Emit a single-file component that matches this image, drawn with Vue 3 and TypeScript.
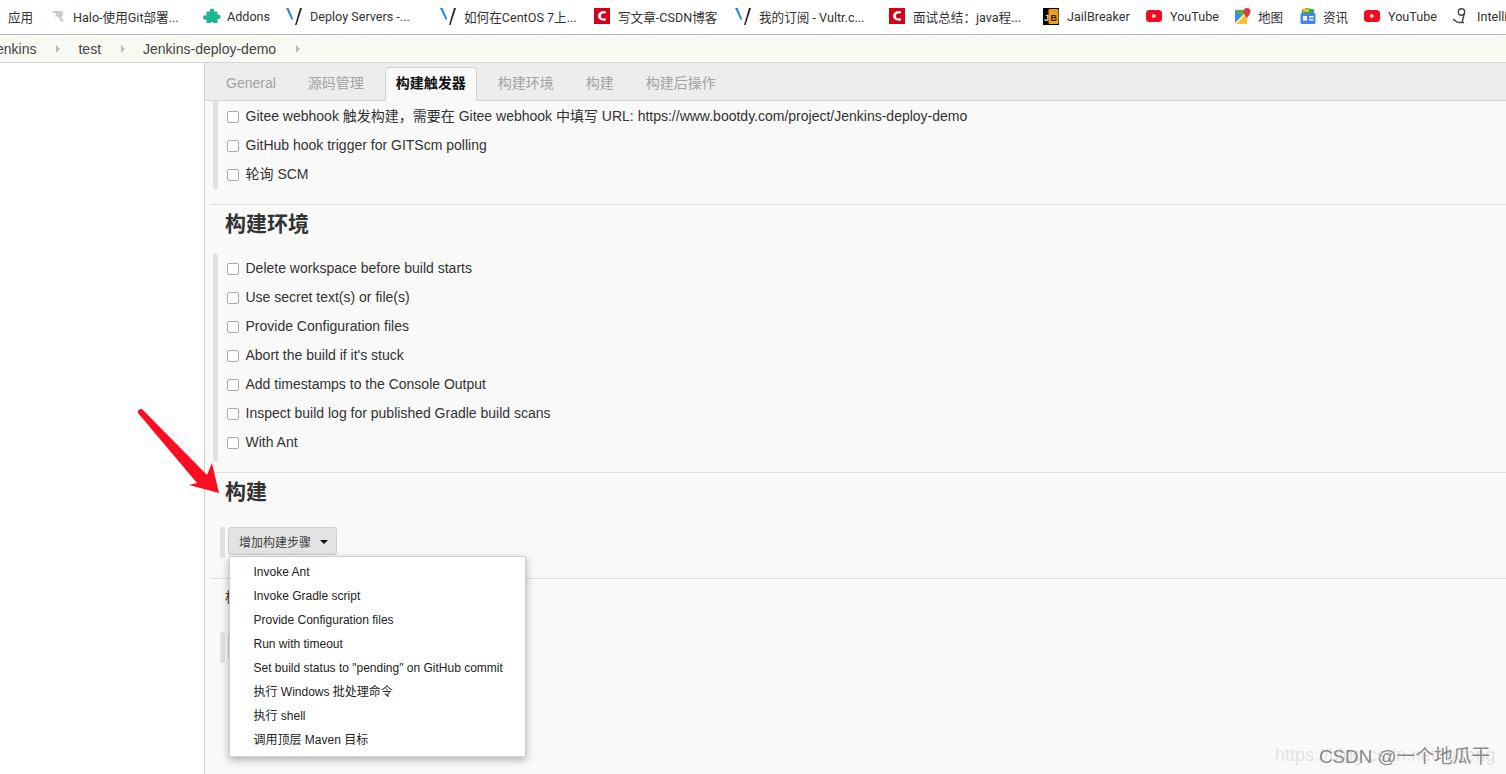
<template>
  <div class="page">
    <div class="bookmarks">
      <div v-for="b in bookmarks" :key="b.left" class="bookmark" :style="{ left: b.left + 'px' }">
        <svg v-if="b.icon" class="bm-icon" viewBox="0 0 18 18">
          <template v-if="b.icon === 'halo'">
            <path d="M3 4h9c3 0 3 5 0 5.500l3 5h-3L9 9.500H6.500L5 14 7 6H4z" fill="#c5ccd2" />
          </template>
          <template v-else-if="b.icon === 'addons'">
            <path d="M7 4.500a2.200 2.200 0 1 1 4 0h3.500v3.200a2.300 2.300 0 1 1 0 4.300V16h-3.800a2 2 0 0 0-3.400 0H3.500v-3.500a2.300 2.300 0 1 1 0-4V4.500z" fill="#1fb592" />
          </template>
          <template v-else-if="b.icon === 'vultr'">
            <path d="M0 1h2.500L7 11.500l-1 2z" fill="#1e88e5" />
            <path d="M14 1h2l-5.500 17H9z" fill="#222" />
          </template>
          <template v-else-if="b.icon === 'csdn'">
            <rect x="0" y="1" width="16" height="16" fill="#d4001a" />
            <path d="M12 4.500c-6-1.500-8 2-8 4.500s3 5.500 8 4.500v-2.200c-3 .8-5 0-5-2.300s2-3.100 5-2.500z" fill="#fff" />
          </template>
          <template v-else-if="b.icon === 'jb'">
            <rect x="0" y="1" width="16" height="17" fill="#000" />
            <rect x="5.500" y="2" width="10" height="15" rx="1.500" fill="#f39c1f" />
            <text x="1" y="13.500" class="jb-j">J</text>
            <text x="7.500" y="13.500" class="jb-b">B</text>
          </template>
          <template v-else-if="b.icon === 'yt'">
            <rect x="0" y="3" width="16" height="12" rx="3.500" fill="#f4071f" />
            <path d="M6.500 6.500l4 2.500-4 2.500z" fill="#fff" />
          </template>
          <template v-else-if="b.icon === 'maps'">
            <path d="M1 3h12v14H1z" fill="#4caf50" />
            <path d="M1 17l12-12v12z" fill="#fbc02d" />
            <path d="M1 3l6 6-6 6z" fill="#4285f4" />
            <path d="M1 17L13 5" stroke="#fff" stroke-width="1.500" />
            <path d="M13 1a3.500 3.500 0 0 1 3.500 3.500C16.500 7 13 11 13 11S9.500 7 9.500 4.500A3.500 3.500 0 0 1 13 1z" fill="#e53935" />
          </template>
          <template v-else-if="b.icon === 'news'">
            <path d="M3 6V2.500L8 1l7 1.500V6z" fill="#34a853" />
            <rect x="4" y="2" width="6" height="3" fill="#fbbc05" />
            <rect x="1.500" y="6" width="15" height="11" rx="1.500" fill="#4285f4" />
            <rect x="4" y="9" width="4" height="4.500" fill="#fff" />
            <rect x="10" y="9" width="4.500" height="1.500" fill="#fff" />
            <rect x="10" y="12" width="4.500" height="1.500" fill="#fff" />
          </template>
          <template v-else>
            <circle cx="8.500" cy="5" r="3.200" fill="none" stroke="#444" stroke-width="1.400" />
            <path d="M11.500 6L9 15.500M0 12.500c2 0 3 3 6 3h5" fill="none" stroke="#444" stroke-width="1.400" />
          </template>
        </svg>
        <span class="bm-text">{{ b.text }}</span>
      </div>
    </div>

    <div class="crumbs">
      <span class="crumb first">Jenkins</span><span class="sep"></span>
      <span class="crumb">test</span><span class="sep"></span>
      <span class="crumb">Jenkins-deploy-demo</span><span class="sep"></span>
    </div>

    <div class="body">
      <aside class="side"></aside>
      <main class="main">
        <div class="tabs">
          <span v-for="t in tabs" :key="t" class="tab" :class="{ active: t === '构建触发器' }">{{ t }}</span>
        </div>

        <div class="section first-section">
          <div class="options trigger">
            <label v-for="o in triggers" :key="o" class="option"><span class="check"></span><span class="label">{{ o }}</span></label>
          </div>
        </div>

        <div class="section">
          <h3>构建环境</h3>
          <div class="options env">
            <label v-for="o in envs" :key="o" class="option"><span class="check"></span><span class="label">{{ o }}</span></label>
          </div>
        </div>

        <div class="section">
          <h3>构建</h3>
          <div class="step-row">
            <button class="add-btn">增加构建步骤<i class="caret"></i></button>
          </div>
        </div>

        <div class="section">
          <h3 class="small">构建后操作</h3>
          <div class="step-row lower">
            <button class="add-btn">增加构建后操作步骤<i class="caret"></i></button>
          </div>
        </div>
      </main>
    </div>

    <div class="menu">
      <div v-for="m in menu" :key="m" class="menu-item">{{ m }}</div>
    </div>

    <svg class="arrow" viewBox="0 0 100 90" width="100" height="90">
      <path d="M1 6c-1-2 1-4 4-4L70 68l5-12 7 30-30-8 8-2z" fill="#fd0d21" />
    </svg>

    <div class="wm-back">https://blog.csdn.net/hxfeng</div>
    <div class="wm-front">CSDN @一个地瓜干</div>
  </div>
</template>

<script setup lang="ts">
interface Bookmark {
  text: string
  left: number
  icon?: string
}

const bookmarks: Bookmark[] = [
  { text: "应用", left: 8 },
  { text: "Halo-使用Git部署...", left: 49, icon: "halo" },
  { text: "Addons", left: 203, icon: "addons" },
  { text: "Deploy Servers -...", left: 286, icon: "vultr" },
  { text: "如何在CentOS 7上...", left: 440, icon: "vultr" },
  { text: "写文章-CSDN博客", left: 594, icon: "csdn" },
  { text: "我的订阅 - Vultr.c...", left: 735, icon: "vultr" },
  { text: "面试总结：java程...", left: 889, icon: "csdn" },
  { text: "JailBreaker", left: 1043, icon: "jb" },
  { text: "YouTube", left: 1146, icon: "yt" },
  { text: "地图", left: 1234, icon: "maps" },
  { text: "资讯", left: 1299, icon: "news" },
  { text: "YouTube", left: 1364, icon: "yt" },
  { text: "IntelliJ IDEA", left: 1453, icon: "idea" },
]

const tabs = ["General", "源码管理", "构建触发器", "构建环境", "构建", "构建后操作"]

const triggers = [
  "Gitee webhook 触发构建，需要在 Gitee webhook 中填写 URL: https://www.bootdy.com/project/Jenkins-deploy-demo",
  "GitHub hook trigger for GITScm polling",
  "轮询 SCM",
]

const envs = [
  "Delete workspace before build starts",
  "Use secret text(s) or file(s)",
  "Provide Configuration files",
  "Abort the build if it's stuck",
  "Add timestamps to the Console Output",
  "Inspect build log for published Gradle build scans",
  "With Ant",
]

const menu = [
  "Invoke Ant",
  "Invoke Gradle script",
  "Provide Configuration files",
  "Run with timeout",
  'Set build status to "pending" on GitHub commit',
  "执行 Windows 批处理命令",
  "执行 shell",
  "调用顶层 Maven 目标",
]
</script>

<style>
html,
body {
  margin: 0;
  overflow: hidden;
  background: #fff;
}
</style>

<style scoped>
.page {
  position: relative;
  width: 1506px;
  height: 774px;
  overflow: hidden;
  font-family: "Liberation Sans", "Noto Sans CJK SC", sans-serif;
  color: #333;
}

.bookmarks {
  position: relative;
  height: 34px;
  background: #fff;
  border-bottom: 1px solid #b9b9b9;
  font-family: "Roboto", "Noto Sans CJK SC", sans-serif;
  font-size: 12.6px;
  color: #333;
  overflow: hidden;
}

.bookmark {
  position: absolute;
  top: 0;
  height: 32px;
  display: flex;
  align-items: center;
  white-space: nowrap;
}

.bm-icon {
  width: 18px;
  height: 18px;
  margin-right: 6px;
  flex: none;
}

.jb-j,
.jb-b {
  font-family: "Liberation Sans", sans-serif;
  font-size: 9px;
  font-weight: 700;
}

.jb-j {
  fill: #ddd;
}

.jb-b {
  fill: #222;
}

.crumbs {
  height: 27px;
  background: #f7f9f3;
  border-bottom: 1px solid #d6d6d6;
  display: flex;
  align-items: center;
  font-size: 14px;
  color: #444;
  white-space: nowrap;
}

.crumb.first {
  margin-left: -11px;
}

.sep {
  width: 0;
  height: 0;
  margin: 0 18px 0 20px;
  border-left: 4px solid #bbb;
  border-top: 4px solid transparent;
  border-bottom: 4px solid transparent;
}

.body {
  display: flex;
  height: 711px;
}

.side {
  width: 204px;
  flex: none;
  background: #fff;
  border-right: 1px solid #d0d0d0;
}

.main {
  flex: 1;
  background: #f9f9f9;
  min-width: 0;
}

.tabs {
  height: 37px;
  box-sizing: content-box;
  background: #ededed;
  border-bottom: 1px solid #d3d3d3;
  display: flex;
  align-items: flex-end;
  padding-left: 10px;
  font-size: 14px;
  color: #a3a3a3;
}

.tab {
  height: 30px;
  line-height: 27px;
  padding: 0 11px;
  white-space: nowrap;
}

.tab:nth-child(2) {
  padding: 0 10px 0 21px;
}

.tab:nth-child(3) {
  margin-left: 11px;
}

.tab.active {
  height: 34px;
  line-height: 31px;
  margin-bottom: -1px;
  background: #f9f9f9;
  color: #111;
  font-weight: 700;
  border: 1px solid #d3d3d3;
  border-bottom: none;
  border-radius: 4px 4px 0 0;
  box-sizing: border-box;
  width: 92px;
  padding: 0;
  text-align: center;
}

.tab.active + .tab {
  padding-left: 21px;
}

.tab:nth-child(5) {
  padding-left: 21px;
  padding-right: 10px;
}

.tab:nth-child(6) {
  padding-left: 22px;
  padding-right: 10px;
}

.section {
  margin-left: 5px;
  border-top: 1px solid #dedede;
}

.first-section {
  border-top: none;
  height: 103px;
}

h3 {
  margin: 0;
  height: 38px;
  padding: 0 0 0 15px;
  font-size: 21px;
  line-height: 38px;
  color: #333;
  font-weight: 700;
}

h3.small {
  font-size: 14px;
  font-weight: 400;
  line-height: 36px;
}

.options {
  margin-left: 3px;
  border-left: 5px solid #e2e2e2;
  padding-left: 9px;
  font-size: 14px;
  color: #333;
}

.trigger {
  height: 88px;
  box-sizing: border-box;
  padding-top: 1px;
}

.env {
  height: 208px;
  margin-top: 11px;
  margin-bottom: 10px;
  box-sizing: border-box;
  padding-top: 0;
}

.option {
  display: flex;
  align-items: center;
  height: 29px;
  white-space: nowrap;
}

.label {
  line-height: 16px;
  margin-top: -2px;
}

.check {
  width: 10px;
  height: 10px;
  margin-right: 6.500px;
  border: 1px solid #aaa;
  border-radius: 2px;
  background: #fff;
  flex: none;
}

.step-row {
  margin: 16px 0 20px 10px;
  height: 31px;
  border-left: 5px solid #e2e2e2;
  padding-left: 3px;
}

.step-row.lower {
  margin-top: 15px;
}

.add-btn {
  height: 28px;
  width: 109px;
  padding: 0 0 0 10px;
  background: #e3e3e3;
  border: 1px solid #d0d0d0;
  border-radius: 3px;
  color: #444;
  font-family: inherit;
  font-size: 12px;
  text-align: left;
  white-space: nowrap;
  overflow: hidden;
}

.caret {
  display: inline-block;
  margin-left: 9px;
  vertical-align: 3px;
  border-top: 4px solid #111;
  border-left: 4px solid transparent;
  border-right: 4px solid transparent;
}

.menu {
  position: absolute;
  left: 229px;
  top: 556px;
  width: 295px;
  height: 198px;
  box-sizing: content-box;
  background: #fff;
  border: 1px solid #cfcfcf;
  box-shadow: 0 3px 8px rgba(0, 0, 0, 0.3);
  padding-top: 1px;
  font-size: 12px;
  color: #222;
}

.menu-item {
  height: 24px;
  line-height: 29px;
  padding-left: 23.500px;
  white-space: nowrap;
}

.arrow {
  position: absolute;
  left: 137px;
  top: 407px;
}

.wm-back,
.wm-front {
  position: absolute;
  white-space: nowrap;
}

.wm-back {
  left: 1275px;
  top: 745px;
  font-size: 18px;
  color: rgba(180, 180, 180, 0.35);
}

.wm-front {
  left: 1319px;
  top: 741px;
  font-size: 18.800px;
  color: rgba(100, 100, 100, 0.75);
}
</style>
